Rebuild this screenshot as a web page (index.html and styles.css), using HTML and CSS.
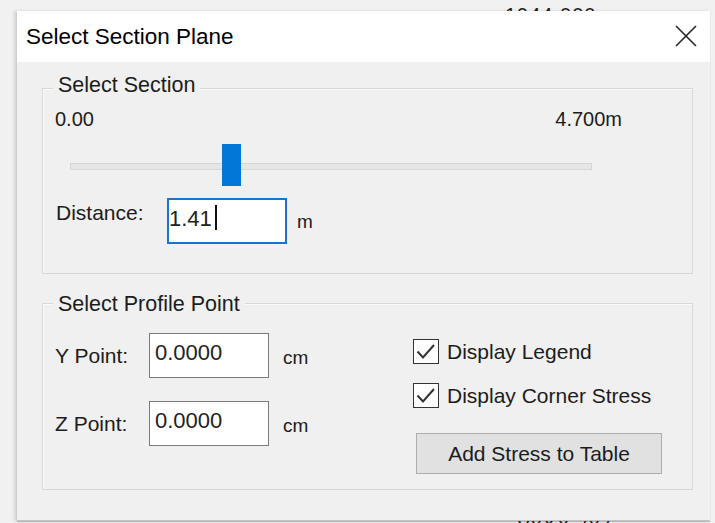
FILE: index.html
```html
<!DOCTYPE html>
<html lang="en">
<head>
<meta charset="utf-8">
<title>Select Section Plane</title>
<link rel="stylesheet" href="styles.css">
</head>
<body>
<div class="desk">
  <span class="behind behind-top">1944.000</span>
  <div class="dialog">
    <div class="titlebar">
      <span class="title">Select Section Plane</span>
      <svg class="close" width="22" height="22" viewBox="0 0 22 22" aria-label="Close">
        <path d="M1 1 L21 21 M21 1 L1 21" stroke="#262626" stroke-width="1.6" fill="none"/>
      </svg>
    </div>
    <div class="content">
      <div class="group g1">
        <span class="group-title gt1">Select Section</span>
        <div class="range-labels">
          <span>0.00</span>
          <span>4.700m</span>
        </div>
        <div class="slider">
          <div class="track"></div>
          <div class="thumb" style="left:152px"></div>
        </div>
        <div class="field-row distance">
          <span class="label">Distance:</span>
          <div class="input focused"><span>1.41</span><span class="caret"></span></div>
          <span class="unit">m</span>
        </div>
      </div>
      <div class="group g2">
        <span class="group-title gt2">Select Profile Point</span>
        <div class="cols">
          <div class="points">
            <div class="field-row point">
              <span class="label">Y Point:</span>
              <div class="input"><span>0.0000</span></div>
              <span class="unit">cm</span>
            </div>
            <div class="field-row point">
              <span class="label">Z Point:</span>
              <div class="input"><span>0.0000</span></div>
              <span class="unit">cm</span>
            </div>
          </div>
          <div class="options">
            <div class="check-row">
              <span class="checkbox">
                <svg width="24" height="23" viewBox="0 0 24 23"><path d="M3.5 11.5 L9 17.5 L20 5" stroke="#333" stroke-width="2" fill="none"/></svg>
              </span>
              <span class="check-label">Display Legend</span>
            </div>
            <div class="check-row">
              <span class="checkbox">
                <svg width="24" height="23" viewBox="0 0 24 23"><path d="M3.5 11.5 L9 17.5 L20 5" stroke="#333" stroke-width="2" fill="none"/></svg>
              </span>
              <span class="check-label">Display Corner Stress</span>
            </div>
            <div class="button">Add Stress to Table</div>
          </div>
        </div>
      </div>
    </div>
  </div>
  <span class="behind behind-bottom">VxXY 7x7</span>
</div>
</body>
</html>
```

FILE: styles.css
```css
* {
  box-sizing: border-box;
}

html,
body {
  margin: 0;
  padding: 0;
}

body {
  width: 715px;
  height: 523px;
  overflow: hidden;
  background: #f1f1f1;
  font-family: "Liberation Sans", Arial, sans-serif;
  color: #1c1c1c;
}

/* desktop area holding the dialog window */
.desk {
  position: relative;
  width: 715px;
  height: 523px;
  padding: 11px 0 0 17px;
}

/* text of the application window underneath */
.behind {
  position: absolute;
  font-size: 20px;
  line-height: 24px;
  color: #222;
  letter-spacing: 1px;
}

.behind-top {
  top: 3px;
  left: 505px;
}

.behind-bottom {
  top: 513px;
  left: 517px;
}

.dialog {
  position: relative;
  z-index: 1;
  width: 693px;
  height: 510px;
  background: #f0f0f0;
  display: flex;
  flex-direction: column;
  border-bottom: 1px solid #c4c4c4;
  box-shadow: -3px 0 3px rgba(0, 0, 0, 0.12), 0 1px 1px rgba(0, 0, 0, 0.2);
}

.titlebar {
  height: 51px;
  flex: none;
  background: #fff;
  display: flex;
  align-items: center;
  justify-content: space-between;
  padding: 0 13px 0 9px;
}

.title {
  font-size: 22.5px;
  color: #000;
}

.close {
  display: block;
  margin-top: -1px;
}

.content {
  flex: 1;
  padding: 26px 17px 0 25px;
  display: flex;
  flex-direction: column;
  gap: 29px;
}

/* group boxes */
.group {
  position: relative;
  border: 1px solid #d8d8d8;
  box-shadow: inset 1px 1px 0 #fafafa;
}

.g1 {
  height: 186px;
}

.g2 {
  height: 187px;
}

.group-title {
  position: absolute;
  left: 10px;
  padding: 0 5px;
  background: #f0f0f0;
  font-size: 21.5px;
  line-height: 24px;
}

.gt1 {
  top: -16px;
}

.gt2 {
  top: -12px;
}

/* section slider */
.range-labels {
  display: flex;
  justify-content: space-between;
  margin: 18px 70px 0 12px;
  font-size: 20px;
  line-height: 24px;
}

.slider {
  position: relative;
  width: 522px;
  height: 42px;
  margin: 13px 0 0 27px;
}

.track {
  position: absolute;
  left: 0;
  right: 0;
  top: 19px;
  height: 7px;
  background: #e6e6e6;
  border: 1px solid #d6d6d6;
}

.thumb {
  position: absolute;
  top: 0;
  width: 19px;
  height: 42px;
  background: #0078d7;
}

/* label / input / unit rows */
.field-row {
  display: flex;
  align-items: center;
}

.label {
  font-size: 21px;
  line-height: 24px;
}

.input {
  width: 120px;
  background: #fff;
  border: 1px solid #7a7a7a;
  font-size: 22px;
  line-height: 24px;
  color: #222;
  display: flex;
  align-items: flex-start;
}

.unit {
  font-size: 19px;
  line-height: 22px;
}

.distance {
  align-items: flex-start;
  margin: 12px 0 0 13px;
}

.distance .label {
  margin-top: 3px;
  width: 111px;
}

.distance .input {
  height: 46px;
  border: 2px solid #1a74c9;
  padding: 7px 0 0 0;
}

.distance .unit {
  margin: 13px 0 0 10px;
}

.caret {
  width: 2px;
  height: 25px;
  background: #111;
  margin: -2px 0 0 3px;
}

/* profile point group */
.cols {
  display: grid;
  grid-template-columns: 370px 1fr;
}

.points {
  display: flex;
  flex-direction: column;
  gap: 23px;
  padding: 29px 0 0 12px;
}

.point .label {
  width: 94px;
}

.point .input {
  height: 45px;
  padding: 7px 0 0 5px;
}

.point .unit {
  margin: 5px 0 0 14px;
}

.options {
  display: flex;
  flex-direction: column;
  padding-top: 35px;
}

.check-row {
  display: flex;
  align-items: center;
  gap: 8px;
  margin-bottom: 19px;
}

.checkbox {
  width: 26px;
  height: 25px;
  border: 1.5px solid #333;
  background: #fff;
  display: flex;
  align-items: center;
  justify-content: center;
}

.checkbox svg {
  display: block;
}

.check-label {
  font-size: 21px;
  line-height: 24px;
}

.button {
  width: 246px;
  height: 41px;
  margin: 6px 0 0 3px;
  background: #e1e1e1;
  border: 1px solid #adadad;
  font-size: 21px;
  line-height: 24px;
  display: flex;
  align-items: center;
  justify-content: center;
}
```
